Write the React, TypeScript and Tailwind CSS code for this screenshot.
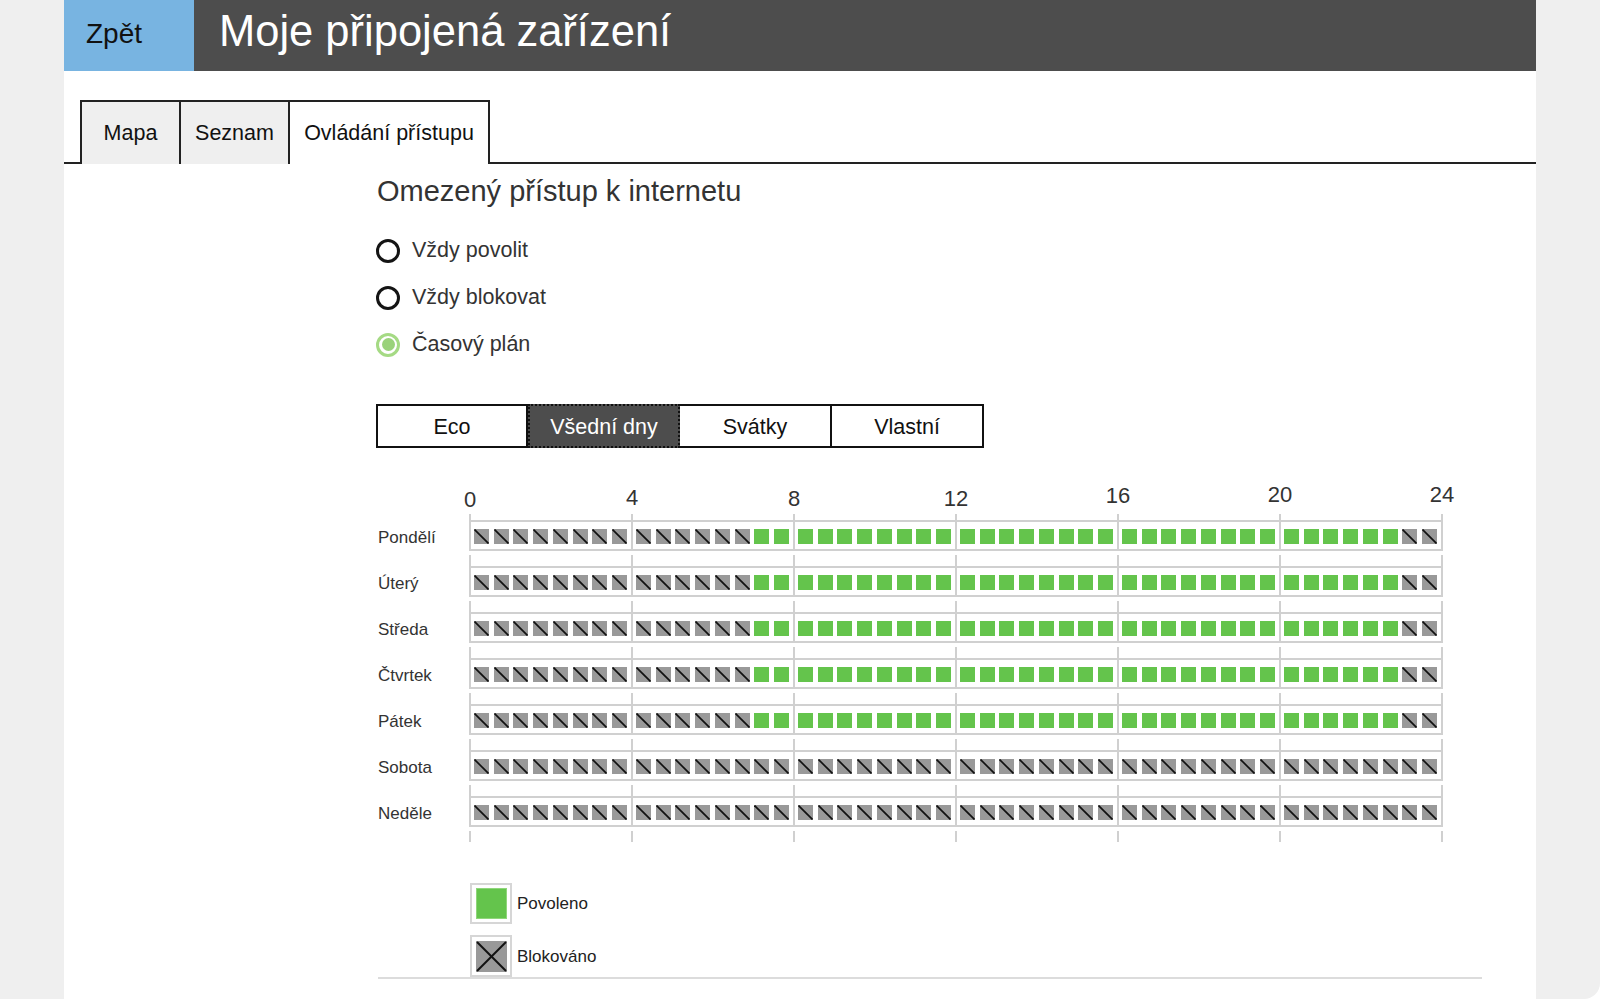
import { useState } from 'react';

const FONT = "font-['Liberation_Sans',Arial,Helvetica,sans-serif]";

const HOURS = [0, 4, 8, 12, 16, 20, 24];
// labels drift upward slightly in the original rendering
const HOUR_SHIFT = [
  '',
  '-translate-y-[2px]',
  '-translate-y-[1px]',
  '-translate-y-[1px]',
  '-translate-y-[4px]',
  '-translate-y-[5px]',
  '-translate-y-[5px]',
];

const weekday = Array.from({ length: 48 }, (_, i) => i >= 14 && i < 46);
const weekend = Array.from({ length: 48 }, () => false);

const DAYS = [
  { name: 'Pondělí', slots: weekday },
  { name: 'Úterý', slots: weekday },
  { name: 'Středa', slots: weekday },
  { name: 'Čtvrtek', slots: weekday },
  { name: 'Pátek', slots: weekday },
  { name: 'Sobota', slots: weekend },
  { name: 'Neděle', slots: weekend },
];

const MODES = ['Eco', 'Všední dny', 'Svátky', 'Vlastní'];
const RADIOS = ['Vždy povolit', 'Vždy blokovat', 'Časový plán'];

function BlockedCell() {
  return (
    <svg width="15" height="15" viewBox="0 0 15 15" className="block">
      <rect width="15" height="15" fill="#999999" />
      <line x1="0.5" y1="0.5" x2="14.5" y2="14.5" stroke="#111" strokeWidth="1.7" />
    </svg>
  );
}

function Cell({ allowed }: { allowed: boolean }) {
  if (allowed) return <div className="w-[15px] h-[15px] bg-[#64c44c]" />;
  return <BlockedCell />;
}

function Stubs({ tall = true }: { tall?: boolean }) {
  return (
    <div className={tall ? 'flex ml-[93px] h-[11px]' : 'flex ml-[93px] h-[6px]'}>
      {[0, 1, 2, 3, 4, 5].map((s) => (
        <div
          key={s}
          className={
            s === 5
              ? 'w-[164px] shrink-0 border-l-2 border-r-2 border-[#d0d0d0]'
              : 'w-[162px] shrink-0 border-l-2 border-[#d0d0d0]'
          }
        />
      ))}
    </div>
  );
}

function DayRow({ name, slots }: { name: string; slots: boolean[] }) {
  return (
    <div className="flex items-center">
      <div className="w-[93px] shrink-0 pl-[2px] pt-[3px] text-[17px] leading-none text-[#333]">{name}</div>
      <div className="flex border-t-2 border-b-2 border-[#d0d0d0] h-[31px]">
        {[0, 1, 2, 3, 4, 5].map((s) => (
          <div
            key={s}
            className={
              s === 5
                ? 'w-[164px] shrink-0 border-l-2 border-r-2 border-[#d0d0d0] pt-[7px] pl-[3px] pr-[4px] flex justify-between items-start'
                : 'w-[162px] shrink-0 border-l-2 border-[#d0d0d0] pt-[7px] pl-[3px] pr-[4px] flex justify-between items-start'
            }
          >
            {slots.slice(s * 8, s * 8 + 8).map((a, i) => (
              <Cell key={i} allowed={a} />
            ))}
          </div>
        ))}
      </div>
    </div>
  );
}

export default function App() {
  const [mode, setMode] = useState(1);
  const [access, setAccess] = useState(2);

  return (
    <div className={`${FONT} bg-white w-full h-[999px]`}>
      <div className="h-[999px] bg-[#efefef] px-[64px] rounded-br-[16px] overflow-hidden">
        <div className="bg-white h-full">
          {/* Header */}
          <div className="flex h-[71px]">
            <button className="w-[130px] bg-[#78b4e1] text-left pl-[22px] pb-[4px] text-[28px] leading-none text-[#111]">
              Zpět
            </button>
            <div className="flex-1 bg-[#4d4d4d] pl-[25px] pt-[10px]">
              <h1 className="text-[43.5px] leading-none text-white">Moje připojená zařízení</h1>
            </div>
          </div>

          {/* Tabs */}
          <div className="flex mt-[29px] h-[64px]">
            <div className="w-[16px] border-b-2 border-[#222]" />
            <div className="w-[99px] border-l-2 border-t-2 border-[#222] bg-[#efefef] flex items-center justify-center text-[21.5px] text-[#111]">
              Mapa
            </div>
            <div className="w-[109px] border-l-2 border-t-2 border-[#222] bg-[#efefef] flex items-center justify-center text-[21.5px] text-[#111]">
              Seznam
            </div>
            <div className="w-[202px] border-l-2 border-t-2 border-r-2 border-[#222] bg-white flex items-center justify-center text-[21.5px] text-[#111]">
              Ovládání přístupu
            </div>
            <div className="flex-1 border-b-2 border-[#222]" />
          </div>

          {/* Content */}
          <div className="ml-[312px] w-[1110px]">
            <h2 className="mt-[13px] text-[29px] leading-none text-[#333] pl-[1px]">Omezený přístup k internetu</h2>

            <div className="mt-[21px]">
              {RADIOS.map((r, i) => (
                <div key={r} className="h-[47px] flex items-center cursor-pointer" onClick={() => setAccess(i)}>
                  {access === i ? (
                    <div className="w-[24px] h-[24px] rounded-full border-[3px] border-[#a5da84] flex items-center justify-center">
                      <div className="w-[13px] h-[13px] rounded-full bg-[#9ad27a]" />
                    </div>
                  ) : (
                    <div className="w-[24px] h-[24px] rounded-full border-[3px] border-[#141414]" />
                  )}
                  <span className="ml-[12px] text-[21.5px] leading-none text-[#333]">{r}</span>
                </div>
              ))}
            </div>

            {/* Mode selector */}
            <div className="mt-[36px] flex h-[44px]">
              {MODES.map((m, i) => (
                <button
                  key={m}
                  onClick={() => setMode(i)}
                  className={
                    mode === i
                      ? 'w-[152px] pt-[4px] border-2 border-dotted border-[#111] bg-[#4d4d4d] text-white text-[21.5px] leading-none'
                      : i === 0
                        ? 'w-[152px] pt-[4px] border-2 border-[#111] bg-white text-[#111] text-[21.5px] leading-none'
                        : 'w-[152px] pt-[4px] border-y-2 border-r-2 border-[#111] bg-white text-[#111] text-[21.5px] leading-none'
                  }
                >
                  {m}
                </button>
              ))}
            </div>

            {/* Hour axis */}
            <div className="mt-[41px] ml-[13px] flex h-[22px]">
              {HOURS.map((h, i) => (
                <div
                  key={h}
                  className={`w-[162px] shrink-0 text-center text-[22px] leading-none text-[#333] ${HOUR_SHIFT[i]}`}
                >
                  {h}
                </div>
              ))}
            </div>

            {/* Schedule grid */}
            <div className="mt-[3px]">
              {DAYS.map((d, i) => (
                <div key={d.name}>
                  {i === 0 ? (
                    <Stubs tall={false} />
                  ) : (
                    <div className="pt-[4px]">
                      <Stubs />
                    </div>
                  )}
                  <DayRow name={d.name} slots={d.slots} />
                </div>
              ))}
              <div className="pt-[4px]">
                <Stubs />
              </div>
            </div>

            {/* Legend */}
            <div className="mt-[41px] ml-[94px]">
              <div className="flex items-center">
                <div className="w-[42px] h-[41px] border-2 border-[#d6d6d6] flex items-center justify-center">
                  <div className="w-[31px] h-[31px] bg-[#64c44c] border border-[#8fd67a]" />
                </div>
                <span className="ml-[5px] text-[17px] leading-none text-[#222]">Povoleno</span>
              </div>
              <div className="flex items-center mt-[11px]">
                <div className="w-[42px] h-[42px] border-2 border-[#d6d6d6] flex items-center justify-center">
                  <svg width="31" height="31" viewBox="0 0 31 31" className="block">
                    <rect width="31" height="31" fill="#999999" />
                    <line x1="1" y1="1" x2="30" y2="30" stroke="#111" strokeWidth="2" />
                    <line x1="30" y1="1" x2="1" y2="30" stroke="#111" strokeWidth="2" />
                  </svg>
                </div>
                <span className="ml-[5px] text-[17px] leading-none text-[#222]">Blokováno</span>
              </div>
            </div>
            <div className="ml-[2px] w-[1104px] border-t-2 border-[#dcdcdc]" />
          </div>
        </div>
      </div>
    </div>
  );
}
